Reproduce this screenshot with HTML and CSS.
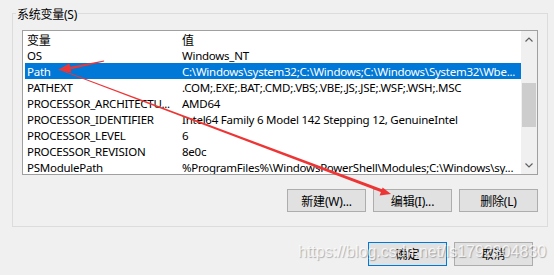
FILE: index.html
```html
<!DOCTYPE html>
<html lang="zh-CN">
<head>
    <meta charset="UTF-8">
    <title>系统变量</title>
    <link rel="stylesheet" href="styles.css">
</head>
<body>
    <div class="group">
        <span class="group-title">系统变量(S)</span>

        <div class="listbox">
            <div class="rows">
                <div class="row head"><span class="col-name">变量</span><span class="col-value">值</span></div>
                <div class="row"><span class="col-name">OS</span><span class="col-value">Windows_NT</span></div>
                <div class="row selected"><span class="col-name">Path</span><span class="col-value">C:\Windows\system32;C:\Windows;C:\Windows\System32\Wbe...</span></div>
                <div class="row"><span class="col-name">PATHEXT</span><span class="col-value">.COM;.EXE;.BAT;.CMD;.VBS;.VBE;.JS;.JSE;.WSF;.WSH;.MSC</span></div>
                <div class="row"><span class="col-name">PROCESSOR_ARCHITECTU...</span><span class="col-value">AMD64</span></div>
                <div class="row"><span class="col-name">PROCESSOR_IDENTIFIER</span><span class="col-value">Intel64 Family 6 Model 142 Stepping 12, GenuineIntel</span></div>
                <div class="row"><span class="col-name">PROCESSOR_LEVEL</span><span class="col-value">6</span></div>
                <div class="row"><span class="col-name">PROCESSOR_REVISION</span><span class="col-value">8e0c</span></div>
                <div class="row"><span class="col-name">PSModulePath</span><span class="col-value">%ProgramFiles%\WindowsPowerShell\Modules;C:\Windows\sy...</span></div>
            </div>
            <div class="scrollbar">
                <div class="arrow">
                    <svg width="8" height="5" viewBox="0 0 8 5"><path d="M0.5 4.5 L4 1 L7.5 4.5" fill="none" stroke="#606060" stroke-width="1.2"/></svg>
                </div>
                <div class="track"><div class="thumb"></div></div>
                <div class="arrow">
                    <svg width="8" height="5" viewBox="0 0 8 5"><path d="M0.5 0.5 L4 4 L7.5 0.5" fill="none" stroke="#606060" stroke-width="1.2"/></svg>
                </div>
            </div>
        </div>

        <div class="actions">
            <button class="btn">新建(W)...</button>
            <button class="btn">编辑(I)...</button>
            <button class="btn">删除(L)</button>
        </div>
    </div>

    <div class="footer">
        <button class="btn primary">确定</button>
        <button class="btn">取消</button>
    </div>

    <div class="watermark">https://blog.csdn.net/ls1792304830</div>

    <!-- red annotation arrows -->
    <svg class="marks" width="554" height="275" viewBox="0 0 554 275">
        <polygon points="104,60.6 104.2,61.6 70.3,69.4 69.6,67" fill="#ee3535"/>
        <polygon points="58,70 71.2,72.4 69.4,63.6" fill="#ee3535"/>
        <polygon points="63,70.6 63.3,71.6 382,192.6 382.8,189.4" fill="#ee3535"/>
        <polygon points="391,194 379.6,195.4 382.6,187.4" fill="#ee3535"/>
    </svg>
</body>
</html>
```

FILE: styles.css
```css
html, body {
    margin: 0;
    padding: 0;
    width: 554px;
    height: 275px;
    overflow: hidden;
    background: #f0f0f0;
    font-family: "Noto Sans", "Noto Sans CJK SC", sans-serif;
    font-size: 11.5px;
    letter-spacing: -0.25px;
    color: #000;
}

.group {
    position: relative;
    margin: 13px 0 0 12px;
    border: 1px solid #dcdcdc;
    padding: 16px 9px 0 9px;
    width: 516px;
    height: 196px;
}

.group-title {
    position: absolute;
    left: 3px;
    top: -7px;
    padding: 0 1px;
    line-height: 16px;
    font-size: 12px;
    background: #f0f0f0;
}

.listbox {
    display: flex;
    height: 143px;
    border: 1px solid #a0a0a0;
    background: #fff;
    overflow: hidden;
}

.rows {
    flex: 1;
    padding-left: 2px;
    overflow: hidden;
}

.row {
    display: flex;
    height: 16px;
    line-height: 18px;
    white-space: nowrap;
}

.row.head {
    line-height: 19px;
    font-size: 12px;
}

.row.selected {
    background: #0078d7;
    color: #fff;
}

.col-name {
    width: 155px;
    padding-left: 2px;
    flex-shrink: 0;
}

.scrollbar {
    width: 16px;
    display: flex;
    flex-direction: column;
    background: #f0f0f0;
}

.arrow {
    height: 17px;
    display: flex;
    justify-content: center;
    align-items: center;
}

.track {
    flex: 1;
    padding-top: 35px;
}

.thumb {
    height: 44px;
    margin: 0 1px;
    background: #cdcdcd;
}

.actions {
    display: flex;
    justify-content: flex-end;
    gap: 7px;
    margin-top: 14px;
}

.btn {
    width: 79px;
    height: 23px;
    padding: 0;
    background: #e1e1e1;
    border: 1px solid #adadad;
    font-family: "Noto Sans", "Noto Sans CJK SC", sans-serif;
    font-size: 12px;
    letter-spacing: -0.2px;
    color: #000;
}

.footer {
    display: flex;
    justify-content: flex-end;
    gap: 7px;
    margin: 15px 21px 0 0;
}

.footer .btn {
    height: 24px;
}

.btn.primary {
    border: 1px solid #0078d7;
}

.watermark {
    position: absolute;
    left: 298px;
    top: 243px;
    font-family: "Liberation Sans", sans-serif;
    font-size: 16px;
    line-height: 18px;
    letter-spacing: 0;
    color: rgba(255, 255, 255, 0.75);
    text-shadow: 1px 1px 1px rgba(0, 0, 0, 0.28);
    pointer-events: none;
}

.marks {
    position: absolute;
    left: 0;
    top: 0;
    pointer-events: none;
}
```
